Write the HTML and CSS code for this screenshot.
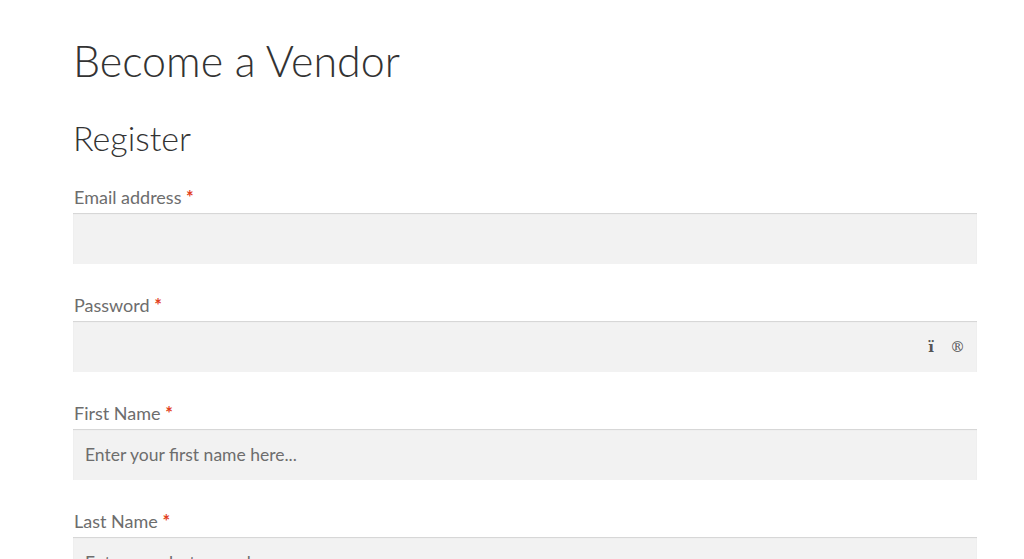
FILE: index.html
```html
<!DOCTYPE html>
<html>
<head>
<meta charset="utf-8">
<link rel="stylesheet" href="styles.css">
</head>
<body>
<main class="page">
  <h1 class="title">Become a Vendor</h1>
  <h2 class="subtitle">Register</h2>
  <form class="form">
    <div class="row">
      <label class="label">Email address <span class="req">*</span></label>
      <div class="field"></div>
    </div>
    <div class="row">
      <label class="label">Password <span class="req">*</span></label>
      <div class="field field-pass"><span class="glyphs"><span class="g1">ï</span><span>®</span></span></div>
    </div>
    <div class="row">
      <label class="label">First Name <span class="req">*</span></label>
      <div class="field"><span class="ph">Enter your first name here...</span></div>
    </div>
    <div class="row">
      <label class="label">Last Name <span class="req">*</span></label>
      <div class="field"><span class="ph">Enter your last name here...</span></div>
    </div>
  </form>
</main>
</body>
</html>
```

FILE: styles.css
```css
html, body {
  margin: 0;
  padding: 0;
  background: #ffffff;
  overflow: hidden;
}
body {
  font-family: Lato, "Open Sans", sans-serif;
  color: #43454b;
  height: 559px;
}
.page {
  padding: 0 47px 0 73px;
}
.title {
  margin: 0;
  padding-top: 35px;
  font-weight: 300;
  font-size: 43px;
  line-height: 52px;
  color: #333333;
}
.subtitle {
  margin: 31px 0 0;
  font-weight: 300;
  font-size: 34px;
  line-height: 40px;
  color: #333333;
}
.form {
  margin-top: 26px;
}
.row {
  margin-bottom: 28px;
}
.label {
  display: block;
  font-size: 18px;
  line-height: 26px;
  color: #6d6d6d;
  margin-bottom: 3px;
  padding-left: 1px;
}
.req {
  color: #e2401c;
  font-weight: 700;
}
.field {
  height: 51px;
  background: #f2f2f2;
  box-shadow: inset 0 1px 1px rgba(0,0,0,0.125);
  display: flex;
  align-items: center;
  padding: 0 12px;
  box-sizing: border-box;
}
.field-pass {
  justify-content: flex-end;
}
.glyphs {
  display: flex;
  gap: 16px;
  font-family: "DejaVu Serif", serif;
  font-size: 15px;
  color: #555555;
}
.g1 {
  font-weight: 700;
}
.ph {
  font-size: 17.5px;
  color: #6d6d6d;
}
```
